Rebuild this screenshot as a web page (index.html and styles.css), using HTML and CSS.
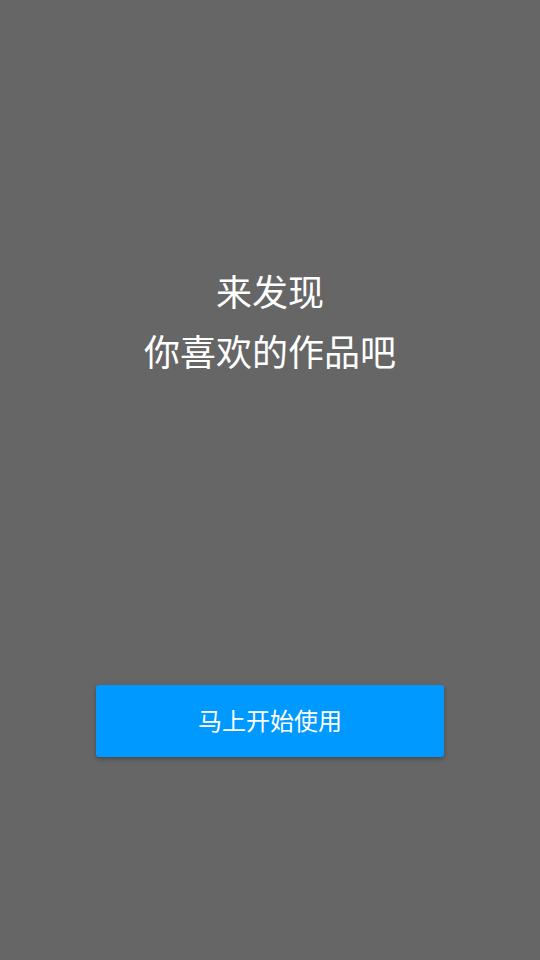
FILE: index.html
```html
<!DOCTYPE html>
<html lang="zh-CN">
<head>
<meta charset="utf-8">
<link rel="stylesheet" href="styles.css">
</head>
<body>
<main class="screen">
  <h1 class="headline">
    <span class="line">来发现</span>
    <span class="line">你喜欢的作品吧</span>
  </h1>
  <button class="start-btn" type="button">马上开始使用</button>
</main>
</body>
</html>
```
FILE: styles.css
```css
html, body {
  margin: 0;
  padding: 0;
  background: #666666;
}
.screen {
  width: 540px;
  height: 960px;
  display: flex;
  flex-direction: column;
  align-items: center;
  padding-top: 260px;
  box-sizing: border-box;
  font-family: "Noto Sans CJK SC", "Noto Sans", sans-serif;
}
.headline {
  margin: 0;
  font-size: 36px;
  font-weight: 400;
  line-height: 60px;
  color: #ffffff;
  text-align: center;
  display: flex;
  flex-direction: column;
}
.start-btn {
  margin-top: 305px;
  width: 348px;
  height: 72px;
  border: none;
  border-radius: 3px;
  background: #0099ff;
  color: #ffffff;
  font-family: "Noto Sans CJK SC", "Noto Sans", sans-serif;
  font-size: 24px;
  box-shadow: 0 2px 4px rgba(0, 0, 0, 0.3);
  padding: 0 0 3px 0;
}
```
